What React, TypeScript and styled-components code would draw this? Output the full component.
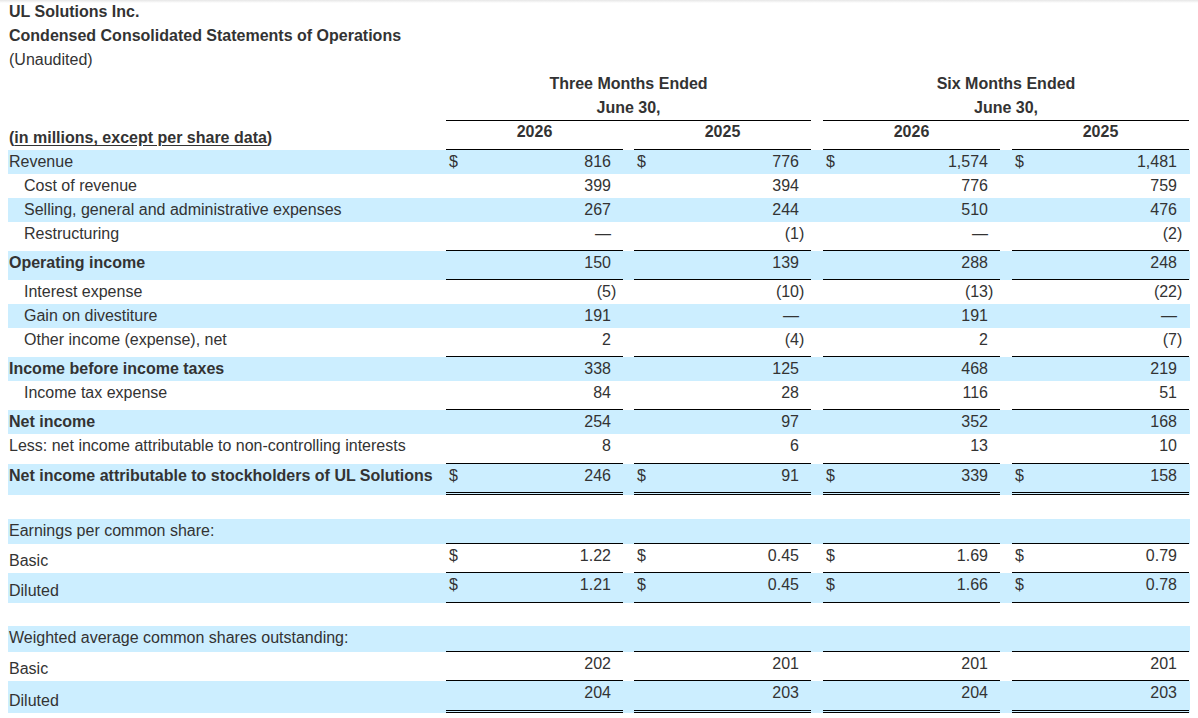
import React from "react";
import styled, { createGlobalStyle, css } from "styled-components";

const GlobalStyle = createGlobalStyle`
  html, body { margin: 0; padding: 0; background: #fff; }
  body {
    font-family: "Liberation Sans", Arial, Helvetica, sans-serif;
    font-size: 16px;
    color: #333;
  }
  * { box-sizing: border-box; }
`;

const COLS = "438px 177px 11px 177px 12px 177px 12px 177px";
const BLUE = "#cceeff";

type Rule = "none" | "single" | "double";

const Page = styled.div`
  padding: 0 8px;
  background: linear-gradient(#e6e6e6, #ffffff 3px) no-repeat;
`;

const TitleLine = styled.div<{ $bold?: boolean }>`
  line-height: 24px;
  height: 24px;
  padding-left: 1px;
  font-weight: ${(p) => (p.$bold ? 700 : 400)};
`;

const Grid = styled.div<{ $h: number; $blue?: boolean }>`
  display: grid;
  grid-template-columns: ${COLS};
  height: ${(p) => p.$h}px;
  background: ${(p) => (p.$blue ? BLUE : "transparent")};
`;

const PeriodCell = styled.div<{ $col: string; $rule?: boolean }>`
  grid-column: ${(p) => p.$col};
  text-align: center;
  font-weight: 700;
  line-height: 24px;
  ${(p) =>
    p.$rule &&
    css`
      border-bottom: 1px solid #000;
    `}
`;

const UnitsLabel = styled.div`
  align-self: end;
  font-weight: 700;
  line-height: 22px;
  padding: 0 0 1px 1px;
`;

const Under = styled.span`
  text-decoration: underline;
  text-underline-offset: 2px;
`;

const YearCell = styled.div`
  text-align: center;
  font-weight: 700;
  line-height: 20px;
  padding-top: 1px;
  border-bottom: 1px solid #000;
`;

const Label = styled.div<{ $indent?: boolean; $bold?: boolean; $bottom?: boolean }>`
  line-height: 22px;
  white-space: nowrap;
  padding-left: ${(p) => (p.$indent ? 16 : 1)}px;
  font-weight: ${(p) => (p.$bold ? 700 : 400)};
  align-self: ${(p) => (p.$bottom ? "end" : "start")};
  padding-top: ${(p) => (p.$bottom ? 0 : 1)}px;
  padding-bottom: ${(p) => (p.$bottom ? 1 : 0)}px;
`;

const NumCell = styled.div<{ $rule: Rule }>`
  display: flex;
  align-items: flex-start;
  line-height: 22px;
  padding-top: 1px;
  border-bottom: ${(p) =>
    p.$rule === "single" ? "1px solid #000" : p.$rule === "double" ? "3px double #000" : "none"};
`;

const Dollar = styled.span`
  padding-left: 3px;
  flex: none;
`;

const Amount = styled.span`
  flex: 1;
  text-align: right;
`;

const Paren = styled.span`
  flex: none;
  width: 12px;
`;

const Gap = styled.div``;

type RowDef = {
  label?: string;
  indent?: boolean;
  bold?: boolean;
  blue?: boolean;
  h: number;
  rule?: Rule;
  dollar?: boolean;
  bottom?: boolean;
  vals?: string[];
};

const rows: RowDef[] = [
  { label: "Revenue", blue: true, h: 24, dollar: true, vals: ["816", "776", "1,574", "1,481"] },
  { label: "Cost of revenue", indent: true, h: 24, vals: ["399", "394", "776", "759"] },
  {
    label: "Selling, general and administrative expenses",
    indent: true,
    blue: true,
    h: 24,
    vals: ["267", "244", "510", "476"],
  },
  { label: "Restructuring", indent: true, h: 29, rule: "single", vals: ["—", "(1)", "—", "(2)"] },
  { label: "Operating income", bold: true, blue: true, h: 29, rule: "single", vals: ["150", "139", "288", "248"] },
  { label: "Interest expense", indent: true, h: 24, vals: ["(5)", "(10)", "(13)", "(22)"] },
  { label: "Gain on divestiture", indent: true, blue: true, h: 24, vals: ["191", "—", "191", "—"] },
  { label: "Other income (expense), net", indent: true, h: 29, rule: "single", vals: ["2", "(4)", "2", "(7)"] },
  { label: "Income before income taxes", bold: true, blue: true, h: 24, vals: ["338", "125", "468", "219"] },
  { label: "Income tax expense", indent: true, h: 29, rule: "single", vals: ["84", "28", "116", "51"] },
  { label: "Net income", bold: true, blue: true, h: 24, vals: ["254", "97", "352", "168"] },
  {
    label: "Less: net income attributable to non-controlling interests",
    h: 30,
    rule: "single",
    vals: ["8", "6", "13", "10"],
  },
  {
    label: "Net income attributable to stockholders of UL Solutions",
    bold: true,
    blue: true,
    h: 31,
    rule: "double",
    dollar: true,
    vals: ["246", "91", "339", "158"],
  },
  { h: 24 },
  { label: "Earnings per common share:", blue: true, h: 25, rule: "single", vals: ["", "", "", ""] },
  { label: "Basic", h: 29, rule: "single", dollar: true, bottom: true, vals: ["1.22", "0.45", "1.69", "0.79"] },
  {
    label: "Diluted",
    blue: true,
    h: 30,
    rule: "single",
    dollar: true,
    bottom: true,
    vals: ["1.21", "0.45", "1.66", "0.78"],
  },
  { h: 23 },
  { label: "Weighted average common shares outstanding:", blue: true, h: 26, rule: "single", vals: ["", "", "", ""] },
  { label: "Basic", h: 29, rule: "single", bottom: true, vals: ["202", "201", "201", "201"] },
  { label: "Diluted", blue: true, h: 32, rule: "double", bottom: true, vals: ["204", "203", "204", "203"] },
];

function Value({ v, dollar, rule }: { v: string; dollar?: boolean; rule: Rule }) {
  const closes = v.endsWith(")");
  const main = closes ? v.slice(0, -1) : v;
  return (
    <NumCell $rule={rule}>
      {dollar && <Dollar>$</Dollar>}
      <Amount>{main}</Amount>
      <Paren>{closes ? ")" : ""}</Paren>
    </NumCell>
  );
}

function StatementRow({ r }: { r: RowDef }) {
  if (!r.label) return <Grid $h={r.h} />;
  const rule = r.rule ?? "none";
  const cells: React.ReactNode[] = [];
  (r.vals ?? []).forEach((v, i) => {
    cells.push(<Value key={`v${i}`} v={v} dollar={r.dollar} rule={rule} />);
    if (i < 3) cells.push(<Gap key={`g${i}`} />);
  });
  return (
    <Grid $h={r.h} $blue={r.blue}>
      <Label $indent={r.indent} $bold={r.bold} $bottom={r.bottom}>
        {r.label}
      </Label>
      {cells}
    </Grid>
  );
}

export default function App() {
  return (
    <>
      <GlobalStyle />
      <Page>
        <TitleLine $bold>UL Solutions Inc.</TitleLine>
        <TitleLine $bold>Condensed Consolidated Statements of Operations</TitleLine>
        <TitleLine>(Unaudited)</TitleLine>
        <Grid $h={24}>
          <PeriodCell $col="2 / 5">Three Months Ended</PeriodCell>
          <PeriodCell $col="6 / 9">Six Months Ended</PeriodCell>
        </Grid>
        <Grid $h={25}>
          <PeriodCell $col="2 / 5" $rule>
            June 30,
          </PeriodCell>
          <PeriodCell $col="6 / 9" $rule>
            June 30,
          </PeriodCell>
        </Grid>
        <Grid $h={29}>
          <UnitsLabel>
            (<Under>in millions, except per share data</Under>)
          </UnitsLabel>
          <YearCell>2026</YearCell>
          <Gap />
          <YearCell>2025</YearCell>
          <Gap />
          <YearCell>2026</YearCell>
          <Gap />
          <YearCell>2025</YearCell>
        </Grid>
        {rows.map((r, i) => (
          <StatementRow key={i} r={r} />
        ))}
      </Page>
    </>
  );
}
